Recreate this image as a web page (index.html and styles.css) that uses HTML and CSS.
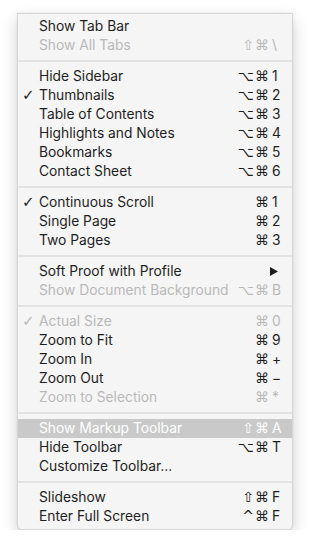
FILE: index.html
```html
<!DOCTYPE html>
<html>
<head>
<meta charset="utf-8">
<link rel="stylesheet" href="styles.css">
</head>
<body>
<div class="menu">
  <div class="row"><span class="chk"></span><span class="lbl">Show Tab Bar</span><span class="mod"></span><span class="key"></span></div>
  <div class="row off"><span class="chk"></span><span class="lbl">Show All Tabs</span><span class="mod">⇧⌘</span><span class="key">\</span></div>
  <div class="sep"></div>
  <div class="row"><span class="chk"></span><span class="lbl">Hide Sidebar</span><span class="mod">⌥⌘</span><span class="key">1</span></div>
  <div class="row"><span class="chk">✓</span><span class="lbl">Thumbnails</span><span class="mod">⌥⌘</span><span class="key">2</span></div>
  <div class="row"><span class="chk"></span><span class="lbl">Table of Contents</span><span class="mod">⌥⌘</span><span class="key">3</span></div>
  <div class="row"><span class="chk"></span><span class="lbl">Highlights and Notes</span><span class="mod">⌥⌘</span><span class="key">4</span></div>
  <div class="row"><span class="chk"></span><span class="lbl">Bookmarks</span><span class="mod">⌥⌘</span><span class="key">5</span></div>
  <div class="row"><span class="chk"></span><span class="lbl">Contact Sheet</span><span class="mod">⌥⌘</span><span class="key">6</span></div>
  <div class="sep"></div>
  <div class="row"><span class="chk">✓</span><span class="lbl">Continuous Scroll</span><span class="mod">⌘</span><span class="key">1</span></div>
  <div class="row"><span class="chk"></span><span class="lbl">Single Page</span><span class="mod">⌘</span><span class="key">2</span></div>
  <div class="row"><span class="chk"></span><span class="lbl">Two Pages</span><span class="mod">⌘</span><span class="key">3</span></div>
  <div class="sep"></div>
  <div class="row"><span class="chk"></span><span class="lbl">Soft Proof with Profile</span><span class="mod"></span><span class="key"><svg class="tri" width="8" height="9" viewBox="0 0 8 9"><path d="M0 0 L8 4.5 L0 9 Z" fill="#1e1e1e"/></svg></span></div>
  <div class="row off"><span class="chk"></span><span class="lbl">Show Document Background</span><span class="mod">⌥⌘</span><span class="key">B</span></div>
  <div class="sep"></div>
  <div class="row off"><span class="chk">✓</span><span class="lbl">Actual Size</span><span class="mod">⌘</span><span class="key">0</span></div>
  <div class="row"><span class="chk"></span><span class="lbl">Zoom to Fit</span><span class="mod">⌘</span><span class="key">9</span></div>
  <div class="row"><span class="chk"></span><span class="lbl">Zoom In</span><span class="mod">⌘</span><span class="key">+</span></div>
  <div class="row"><span class="chk"></span><span class="lbl">Zoom Out</span><span class="mod">⌘</span><span class="key">−</span></div>
  <div class="row off"><span class="chk"></span><span class="lbl">Zoom to Selection</span><span class="mod">⌘</span><span class="key">*</span></div>
  <div class="sep"></div>
  <div class="row hi"><span class="chk"></span><span class="lbl">Show Markup Toolbar</span><span class="mod">⇧⌘</span><span class="key">A</span></div>
  <div class="row"><span class="chk"></span><span class="lbl">Hide Toolbar</span><span class="mod">⌥⌘</span><span class="key">T</span></div>
  <div class="row"><span class="chk"></span><span class="lbl">Customize Toolbar…</span><span class="mod"></span><span class="key"></span></div>
  <div class="sep"></div>
  <div class="row"><span class="chk"></span><span class="lbl">Slideshow</span><span class="mod">⇧⌘</span><span class="key">F</span></div>
  <div class="row"><span class="chk"></span><span class="lbl">Enter Full Screen</span><span class="mod">^⌘</span><span class="key">F</span></div>
</div>
</body>
</html>
```
FILE: styles.css
```css
html, body {
  margin: 0;
  padding: 0;
  background: #ffffff;
}
body {
  padding: 13px 0 0 17px;
  font-family: Inter, "Liberation Sans", sans-serif;
  font-size: 13.8px;
  color: #1e1e1e;
}
.menu {
  box-sizing: border-box;
  width: 276px;
  padding: 3px 0;
  background: #f5f5f5;
  border: 1px solid #d6d6d6;
  border-radius: 0 0 5px 5px;
  box-shadow: 0 6px 16px rgba(0, 0, 0, 0.18), 0 0 3px rgba(0, 0, 0, 0.08);
}
.row {
  display: grid;
  grid-template-columns: 21px 1fr auto 11px;
  align-items: center;
  height: 19px;
  line-height: 19px;
  padding-right: 9px;
  white-space: nowrap;
}
.chk {
  padding-left: 4px;
  font-family: "DejaVu Sans", sans-serif;
  font-size: 15px;
  font-weight: bold;
}
.mod {
  font-family: "DejaVu Sans", sans-serif;
  font-size: 14px;
  text-align: right;
  padding-right: 2px;
  letter-spacing: 1px;
}
.key {
  text-align: left;
  display: flex;
  align-items: center;
}
.tri {
  display: block;
  margin-left: -2px;
}
.off {
  color: #b9b9b9;
}
.hi {
  background: #c9c9c9;
  color: #ffffff;
}
.sep {
  height: 2px;
  margin: 5px 0;
  background: #e3e3e3;
}
```
